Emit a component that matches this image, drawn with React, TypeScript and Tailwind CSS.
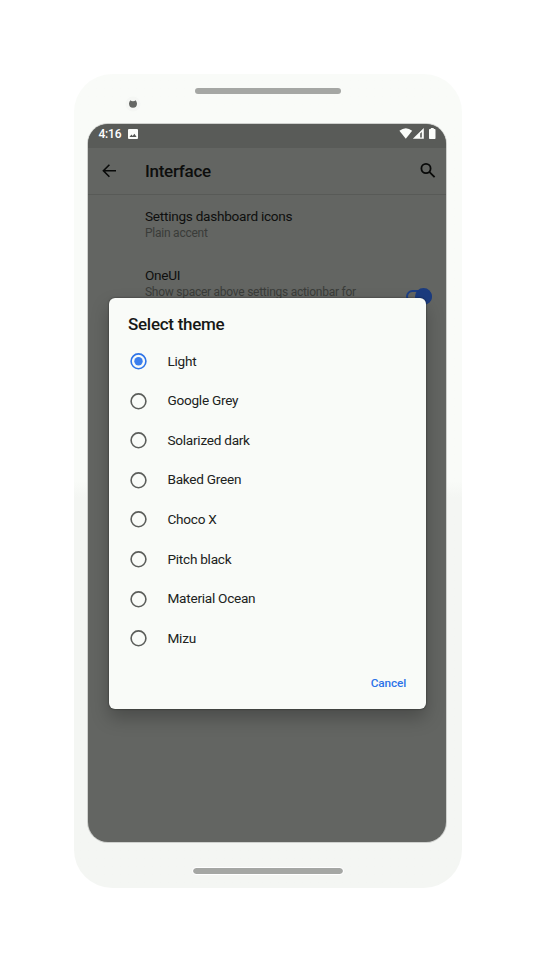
const themes = [
  'Light',
  'Google Grey',
  'Solarized dark',
  'Baked Green',
  'Choco X',
  'Pitch black',
  'Material Ocean',
  'Mizu',
];

function StatusBar() {
  return (
    <div className="flex h-6 items-start bg-[#595b58] pl-[10.5px] pr-[10px] text-white">
      <span className="mt-[2px] w-[29.5px] whitespace-nowrap text-[12px] tracking-[-0.2px] leading-4 font-medium">4:16</span>
      <svg className="mt-[5px]" width="10" height="10" viewBox="0 0 10 10">
        <rect width="10" height="10" rx="1" fill="#fbfdfa" />
        <path d="M1.5 8 L3.4 5.4 L4.7 7 L6.4 4.8 L8.6 8 Z" fill="#555754" />
      </svg>
      <svg className="ml-auto mt-[4px]" width="37" height="12" viewBox="0 0 37 12" fill="#fbfdfa">
        <path d="M0.4 2.7 Q6.8 -2.3 13.2 2.7 L6.8 10.7 Z" />
        <path fillRule="evenodd" d="M13.8 10.7 L24.8 0 V10.7 Z M21.2 5.5 V9.5 H22.8 V4 Z" />
        <path d="M30.8 1 H31.8 V0 H34.7 V1 H35.7 Q36.5 1 36.5 1.8 V10.2 Q36.5 11 35.7 11 H30.8 Q30 11 30 10.2 V1.8 Q30 1 30.8 1 Z" />
      </svg>
    </div>
  );
}

function AppBar() {
  return (
    <div className="flex h-[47px] items-center border-b border-[#585a57] pl-[14px] pr-[10px]">
      <svg width="15" height="14" viewBox="0 0 15 14" fill="none" stroke="#090a09" strokeWidth="1.6">
        <path d="M14 6.8 H1.8 M7.4 0.8 L1.4 6.8 L7.4 12.8" />
      </svg>
      <h1 className="ml-[28px] text-[17px] tracking-[-0.28px] leading-5 font-medium text-[#0d0e0d]">Interface</h1>
      <svg className="ml-auto" width="16" height="16" viewBox="0 0 16 16" fill="none" stroke="#090a09" strokeWidth="1.8">
        <circle cx="6" cy="5.5" r="4.6" />
        <path d="M9.3 8.8 L14.6 14.1" />
      </svg>
    </div>
  );
}

function SettingsList() {
  return (
    <div className="pl-[57px] whitespace-nowrap">
      <div className="pt-[12px]">
        <div className="text-[13.6px] tracking-[-0.26px] leading-[18px] text-[#0e0f0e]">Settings dashboard icons</div>
        <div className="mt-px text-[12px] tracking-[-0.24px] leading-[15px] text-[#3a3c39]">Plain accent</div>
      </div>
      <div className="flex pt-[25px]">
        <div className="w-[260.5px]">
          <div className="text-[13.6px] tracking-[-0.26px] leading-[18px] text-[#0e0f0e]">OneUI</div>
          <div className="mt-px text-[12px] tracking-[-0.26px] leading-[15px] text-[#3a3c39]">Show spacer above settings actionbar for</div>
        </div>
        <div className="mt-[24px] flex h-[13px] w-[26px] items-center justify-end rounded-full border-2 border-[#1d3f86]">
          <div className="-mr-[2px] size-[17px] shrink-0 rounded-full bg-[#1b3b7e]" />
        </div>
      </div>
    </div>
  );
}

function Radio({ checked }: { checked: boolean }) {
  return (
    <svg width="17" height="17" viewBox="0 0 17 17" fill="none">
      <circle cx="8.5" cy="8.3" r="7.4" stroke={checked ? '#2d73e8' : '#5b5d5a'} strokeWidth="1.6" />
      {checked && <circle cx="8.5" cy="8.3" r="4.2" fill="#3b7eed" />}
    </svg>
  );
}

function ThemeDialog() {
  return (
    <div
      role="dialog"
      className="absolute left-[20.5px] top-[174px] flex h-[411px] w-[317px] flex-col rounded-[6px] bg-[#f9fbf8] shadow-[0_0_2px_rgba(0,0,0,0.6),0_9px_18px_rgba(0,0,0,0.25)]"
    >
      <h2 className="pl-[19.5px] pt-[16px] text-[17px] tracking-[-0.28px] leading-5 font-medium text-[#161816]">Select theme</h2>
      <div className="mt-[8px] flex flex-col">
        {themes.map((name, i) => (
          <div key={name} className="flex h-[39.55px] items-center gap-[21px] pl-[21px]">
            <Radio checked={i === 0} />
            <span className="-mt-[2px] text-[13.6px] tracking-[-0.26px] leading-5 text-[#202220]">{name}</span>
          </div>
        ))}
      </div>
      <div className="mt-[16.8px] flex justify-end pr-[19.5px]">
        <button className="text-[11.8px] tracking-[-0.15px] leading-4 font-medium text-[#2d73e8]">Cancel</button>
      </div>
    </div>
  );
}

export default function App() {
  return (
    <div className="flex h-[963px] w-[537px] items-start bg-white pl-[74px] pt-[74px] font-[Roboto,sans-serif]">
      <div className="flex h-[814px] w-[388px] flex-col rounded-[38px] bg-linear-to-b from-[#f9fbf8] from-50% to-[#f4f6f3] to-52%">
        <div className="relative flex h-[49px] justify-center pt-[14px]">
          <div className="h-[6px] w-[146px] rounded-full bg-[#a5a7a4]" />
          <svg className="absolute left-[51px] top-[22px]" width="16" height="16" viewBox="0 0 16 16">
            <circle cx="8" cy="8" r="7.5" fill="#f5f7f4" />
            <path d="M4 7.5 Q4.2 5.5 5.4 4.2 Q6.2 5.2 8 5.2 Q9.8 5.2 10.6 4.2 Q11.8 5.5 12 7.5 A4 4.2 0 0 1 4 7.5 Z" fill="#656764" />
          </svg>
        </div>
        <div className="ml-[13px] h-[720px] w-[360px] rounded-[21px] bg-[#cfd1ce] p-px">
          <div className="relative h-[718px] overflow-hidden rounded-[20px] bg-[#636562]">
            <StatusBar />
            <AppBar />
            <SettingsList />
            <ThemeDialog />
          </div>
        </div>
        <div className="mt-[25px] flex justify-center">
          <div className="h-[6px] w-[150px] rounded-full bg-[#a5a7a4] outline outline-white" />
        </div>
      </div>
    </div>
  );
}
